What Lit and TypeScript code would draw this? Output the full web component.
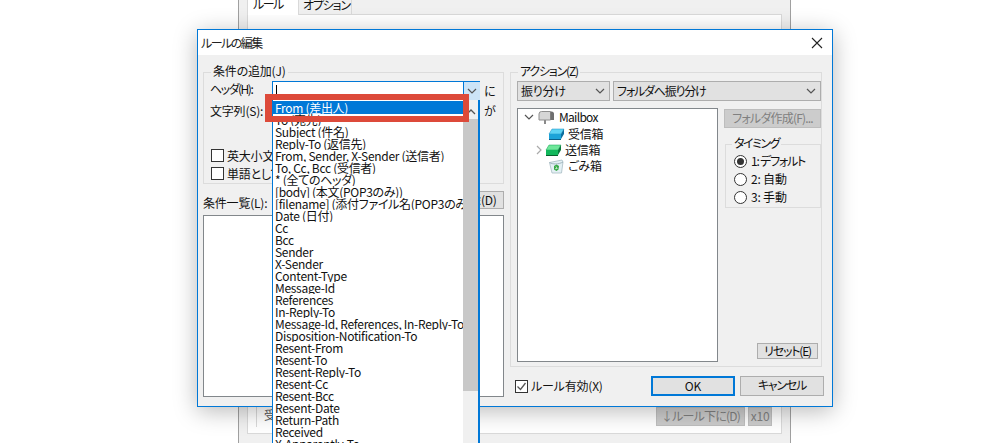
import { LitElement, html, css } from "lit";
import { customElement } from "lit/decorators.js";

const ROWS = [
  "From (差出人)", "To (宛先)", "Subject (件名)", "Reply-To (返信先)",
  "From, Sender, X-Sender (送信者)", "To, Cc, Bcc (受信者)", "* (全てのヘッダ)",
  "[body] (本文(POP3のみ))", "[filename] (添付ファイル名(POP3のみ))", "Date (日付)",
  "Cc", "Bcc", "Sender", "X-Sender", "Content-Type", "Message-Id", "References",
  "In-Reply-To", "Message-Id, References, In-Reply-To", "Disposition-Notification-To",
  "Resent-From", "Resent-To", "Resent-Reply-To", "Resent-Cc", "Resent-Bcc",
  "Resent-Date", "Return-Path", "Received", "X-Apparently-To",
];

const chev = html`<svg class="chev" width="10" height="6" viewBox="0 0 10 6"><path d="M1 1l4 4 4-4" fill="none" stroke="#555" stroke-width="1.2"/></svg>`;
const check = html`<svg width="11" height="11" viewBox="0 0 11 11"><path d="M1.500 5.500l3 3 5-6.500" fill="none" stroke="#555" stroke-width="1.300"/></svg>`;

@customElement("app-root")
export class AppRoot extends LitElement {
  static styles = css`
    :host {
      display: block; position: relative; width: 1000px; height: 443px; overflow: hidden;
      background: #fff; color: #111;
      font: 12px/16px "Noto Sans CJK JP", "Noto Sans", sans-serif; letter-spacing: -0.2px;
      font-feature-settings: "palt";
    }
    .k1 { letter-spacing: -0.8px; }
    .k2 { letter-spacing: -1.2px; }
    .k3 { letter-spacing: -1.5px; }
    .back {
      position: absolute; left: 238px; top: -20px; width: 553px; height: 480px; box-sizing: border-box;
      background: #f0f0f0; border: 1px solid #a0a0a0; border-top: 0; padding: 0 8px;
    }
    .tabs { display: flex; height: 34px; align-items: flex-end; }
    .tab { width: 52px; height: 15px; line-height: 10px; box-sizing: border-box; white-space: nowrap; }
    .tab.active { background: #fff; border: 1px solid #d9d9d9; border-width: 0 1px 0 1px; margin-right: -1px; position: relative; z-index: 1; height: 16px; margin-bottom: -1px; padding-left: 5px; }
    .tab.other { background: #f0f0f0; border: 1px solid #d9d9d9; border-bottom: 0; width: 54px; padding-left: 4px; }
    .panel {
      height: 420px; box-sizing: border-box; background: #fff; border: 1px solid #d9d9d9;
      padding: 392px 9px 0 8px; display: flex; align-items: flex-start;
    }
    .ghost { color: #555; flex: 1; height: 20px; padding-left: 7px; border-left: 1px solid #d9d9d9; }
    .dis {
      background: #ccc; color: #808080; border: 1px solid #bfbfbf; box-sizing: border-box;
      height: 19px; line-height: 16px; text-align: center; white-space: nowrap;
    }
    .down { width: 89px; margin-right: 3px; }
    .x10 { width: 24px; }

    .dialog {
      position: absolute; left: 197px; top: 29px; width: 636px; height: 378px; box-sizing: border-box;
      border: 1px solid #0078d7; background: #f0f0f0; box-shadow: 0 4px 22px rgba(0,0,0,.28);
      display: flex; flex-direction: column;
    }
    .title {
      height: 25px; flex: none; background: #fff; display: flex; align-items: center;
      justify-content: space-between; padding: 0 9px 0 3px; color: #222;
    }
    .body { flex: 1; display: flex; padding: 17px 8px 0 5px; gap: 6px; }
    .left { width: 301px; flex: none; }
    .right { flex: 1; display: flex; flex-direction: column; }

    .group { position: relative; border: 1px solid #dcdcdc; box-sizing: border-box; }
    .legend {
      position: absolute; left: 7px; top: -10px; padding: 0 2px; background: #f0f0f0; white-space: nowrap; line-height: 16px;
    }
    .cond { height: 112px; padding: 8px 0 0 6px; }
    .row { display: flex; align-items: center; }
    .lab { width: 62px; flex: none; white-space: nowrap; }
    .lab.up2 { margin-bottom: 4px; }
    .combo {
      width: 208px; height: 20px; box-sizing: border-box; border: 1px solid #0078d7; background: #fff;
      display: flex; justify-content: space-between; padding-left: 3px;
    }
    .caret { width: 1px; height: 12px; background: #000; margin-top: 3px; }
    .arrow {
      width: 16px; margin-right: -1px; border-left: 1px solid #0078d7; background: #cce4f7;
      display: flex; align-items: center; justify-content: center;
    }
    .suffix { margin-left: 4px; }
    .row2 { height: 20px; }
    .row2 .blank { width: 208px; }
    .checks { margin-top: 28px; display: flex; flex-direction: column; gap: 5px; padding-left: 1px; }
    .cb { display: flex; align-items: center; gap: 3px; height: 13px; white-space: nowrap; }
    .box {
      width: 13px; height: 13px; box-sizing: border-box; border: 1px solid #333; background: #fff;
      display: flex; align-items: center; justify-content: center; flex: none;
    }
    .listhead { display: flex; justify-content: space-between; margin-top: 7px; height: 18px; }
    .listhead .cap { padding-top: 4px; }
    .btn {
      background: #e1e1e1; border: 1px solid #adadad; box-sizing: border-box; text-align: center; color: #111; white-space: nowrap;
    }
    .del { width: 54px; height: 18px; line-height: 15px; }
    .list { height: 182px; margin-top: 6px; background: #fff; border: 1px solid #82878b; box-sizing: border-box; }

    .act { width: 312px; height: 295px; padding: 8px 0 0 6px; }
    .selects { display: flex; gap: 3px; }
    .sel {
      height: 20px; box-sizing: border-box; border: 1px solid #adadad; background: #e1e1e1;
      display: flex; align-items: center; justify-content: space-between; padding: 0 4px 0 3px;
    }
    .sel.a { width: 93px; }
    .sel.b { width: 208px; }
    .cols { display: flex; margin-top: 7px; gap: 6px; }
    .tree {
      width: 201px; height: 254px; box-sizing: border-box; background: #fff; border: 1px solid #82878b;
      padding: 0 0 0 5px;
    }
    .node { display: flex; align-items: center; height: 16.4px; gap: 3px; white-space: nowrap; }
    .tw { width: 12px; display: flex; justify-content: center; flex: none; }
    .tw.sub { margin-left: 10px; margin-right: -3px; }
    .ind { width: 22px; flex: none; }
    .mb { margin-left: 1px; letter-spacing: -0.7px; }
    .side { width: 96px; display: flex; flex-direction: column; }
    .mk { width: 97px; height: 19px; line-height: 16px; margin-top: 1px; border-color: #bdbdbd; }
    .timing { margin: 16px 0 0 1px; height: 64px; width: 96px; padding: 7px 0 0 8px; }
    .timing .legend { left: 6px; }
    .radio { display: flex; align-items: center; gap: 4px; height: 18px; white-space: nowrap; }
    .rd {
      width: 13px; height: 13px; box-sizing: border-box; border: 1px solid #333; border-radius: 50%; background: #fff;
      display: flex; align-items: center; justify-content: center; flex: none;
    }
    .rd.on::after { content: ""; width: 7px; height: 7px; border-radius: 50%; background: #333; }
    .reset { width: 61px; height: 16px; line-height: 13px; margin: 135px 0 0 33px; }
    .foot { display: flex; align-items: center; margin-top: 9px; padding-left: 5px; }
    .foot .cb { flex: 1; }
    .ok, .cancel { width: 84px; height: 20px; line-height: 16px; }
    .ok { border: 2px solid #0078d7; margin-right: 5px; line-height: 15px; }

    .drop {
      position: absolute; left: 272px; top: 100px; width: 208px; height: 360px; box-sizing: border-box;
      background: #fff; border: 1px solid #0078d7; border-width: 0 2px 0 1px; display: flex; overflow: hidden;
    }
    .items { flex: 1; min-width: 0; overflow: hidden; padding-top: 1px; letter-spacing: -0.3px; }
    .item { height: 12px; line-height: 12px; white-space: nowrap; padding-left: 2px; overflow: hidden; }
    .item:first-child { height: 13px; background: #0078d7; color: #fff; line-height: 13px; }
    .bar { width: 15px; flex: none; background: #f0f0f0; display: flex; flex-direction: column; }
    .up { height: 19px; display: flex; align-items: center; justify-content: center; padding-top: 4px; box-sizing: border-box; }
    .thumb { height: 272px; background: #c8c8c8; }
    .hl {
      position: absolute; left: 265px; top: 94px; width: 204px; height: 28px; box-sizing: border-box;
      border: 6px solid #dd4a3a; border-left-width: 7px; pointer-events: none;
    }
  `;

  render() {
    return html`
      <div class="back">
        <div class="tabs">
          <div class="tab active k3">ルール</div>
          <div class="tab other k2">オプション</div>
        </div>
        <div class="panel">
          <div class="ghost">受</div>
          <div class="dis down k1">↓ルール下に(D)</div>
          <div class="dis x10">x10</div>
        </div>
      </div>

      <div class="dialog">
        <div class="title">
          <span class="k3">ルールの編集</span>
          <svg width="12" height="12" viewBox="0 0 12 12"><path d="M1 1l10 10M11 1L1 11" stroke="#222" stroke-width="1.100"/></svg>
        </div>
        <div class="body">
          <div class="left">
            <div class="group cond">
              <span class="legend">条件の追加(J)</span>
              <div class="row">
                <span class="lab up2 k3">ヘッダ(H):</span>
                <div class="combo"><span class="caret"></span><span class="arrow">${chev}</span></div>
                <span class="suffix">に</span>
              </div>
              <div class="row row2">
                <span class="lab">文字列(S):</span><span class="blank"></span><span class="suffix">が</span>
              </div>
              <div class="checks">
                <label class="cb"><span class="box"></span>英大小文字を区別</label>
                <label class="cb"><span class="box"></span>単語として検索</label>
              </div>
            </div>
            <div class="listhead"><span class="cap">条件一覧(L):</span><span class="btn del">削除(D)</span></div>
            <div class="list"></div>
          </div>
          <div class="right">
            <div class="group act">
              <span class="legend k2">アクション(Z)</span>
              <div class="selects">
                <div class="sel a"><span>振り分け</span>${chev}</div>
                <div class="sel b"><span class="k2">フォルダへ振り分け</span>${chev}</div>
              </div>
              <div class="cols">
                <div class="tree">
                  <div class="node">
                    <span class="tw">${chev}</span>
                    <svg width="17" height="14" viewBox="0 0 17 14"><path d="M3.500 1.500h9v8.500H1V4a2.500 2.500 0 0 1 2.500-2.500z" fill="#d6d6d6" stroke="#8f8f8f"/><path d="M12.500 1.500h1A2.500 2.500 0 0 1 16 4v6h-3.500z" fill="#6f6f6f"/><rect x="6" y="10" width="2" height="4" fill="#8a8a8a"/></svg>
                    <span class="mb">Mailbox</span>
                  </div>
                  <div class="node"><span class="ind"></span><svg width="17" height="12" viewBox="0 0 17 12"><path d="M4 1h12l-3 5H1z" fill="#5fd4f4" stroke="#1a8fc0" stroke-width=".5"/><path d="M1 6h12v5H1z" fill="#1ca3d8"/><path d="M13 6l3-5v5l-3 5z" fill="#0c6f9f"/><path d="M1 11.500h12" stroke="#0c5f88"/></svg><span>受信箱</span></div>
                  <div class="node"><span class="tw sub"><svg width="6" height="10" viewBox="0 0 6 10"><path d="M1 1l4 4-4 4" fill="none" stroke="#aaa" stroke-width="1.200"/></svg></span><svg width="17" height="12" viewBox="0 0 17 12"><path d="M4 1h12l-3 5H1z" fill="#6fe79a" stroke="#12a050" stroke-width=".5"/><path d="M1 6h12v5H1z" fill="#12b85c"/><path d="M13 6l3-5v5l-3 5z" fill="#0b7a3c"/><path d="M1 11.500h12" stroke="#06602c"/></svg><span>送信箱</span></div>
                  <div class="node"><span class="ind"></span><svg width="17" height="15" viewBox="0 0 17 15"><path d="M1.500 3.500L14 1l1 2-1.500 11H4z" fill="#e3f0f4" stroke="#a8bcc4" stroke-width=".8"/><path d="M1.500 3.500c3 2 9 2 13.500-.5" fill="none" stroke="#8fa6b0" stroke-width=".8"/><path d="M6 7l2.500-1.500L11 7l-.5 3.500-2 1.500-2.500-1.500z" fill="#35a845"/><path d="M8 7.500l1.200 2-2 .2" fill="none" stroke="#e8f8e8" stroke-width=".8"/></svg><span>ごみ箱</span></div>
                </div>
                <div class="side">
                  <div class="dis mk k1">フォルダ作成(F)...</div>
                  <div class="group timing">
                    <span class="legend k3">タイミング</span>
                    <div class="radio"><span class="rd on"></span><span class="k2">1: デフォルト</span></div>
                    <div class="radio"><span class="rd"></span>2: 自動</div>
                    <div class="radio"><span class="rd"></span>3: 手動</div>
                  </div>
                  <div class="btn reset k2">リセット(E)</div>
                </div>
              </div>
            </div>
            <div class="foot">
              <label class="cb"><span class="box">${check}</span>ルール有効(X)</label>
              <div class="btn ok">OK</div>
              <div class="btn cancel k2">キャンセル</div>
            </div>
          </div>
        </div>
      </div>

      <div class="drop">
        <div class="items">${ROWS.map((r) => html`<div class="item">${r}</div>`)}</div>
        <div class="bar">
          <div class="up"><svg width="10" height="6" viewBox="0 0 10 6"><path d="M1 5l4-4 4 4" fill="none" stroke="#555" stroke-width="1.300"/></svg></div>
          <div class="thumb"></div>
        </div>
      </div>
      <div class="hl"></div>
    `;
  }
}
